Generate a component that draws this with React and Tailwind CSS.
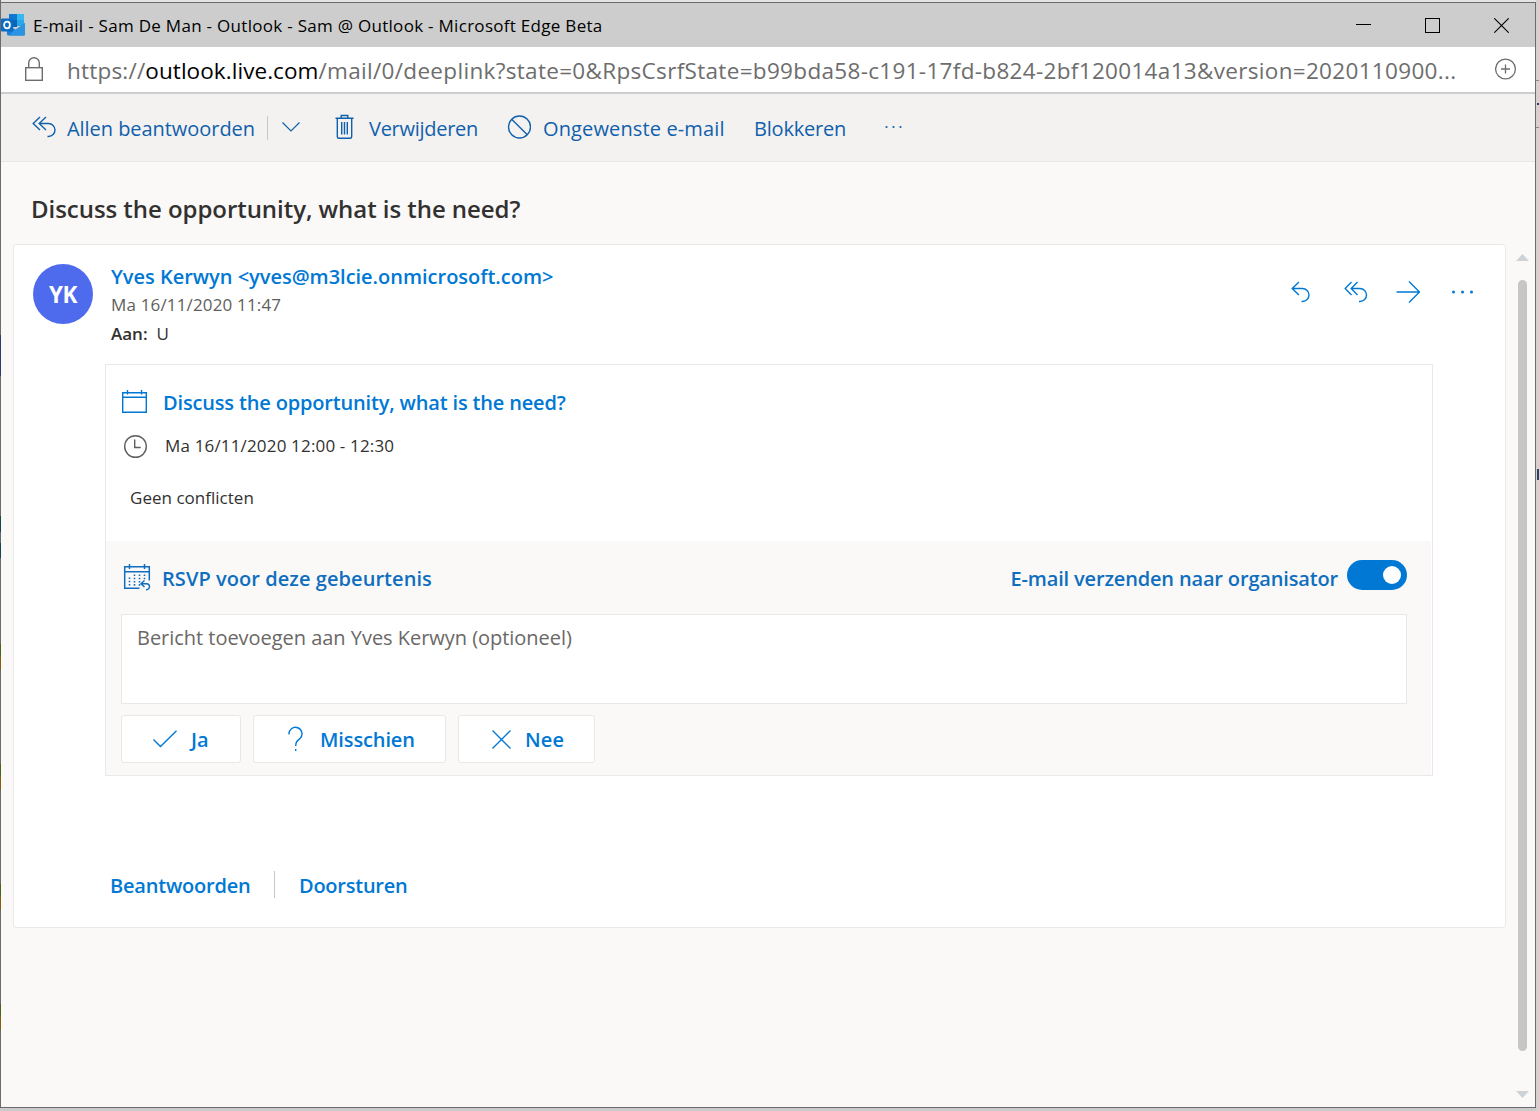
import React from "react";

const LEFT_EDGE = [
  [335, "bg-[#6b6b6b]"],
  [41, "bg-[#2f3a72]"],
  [140, "bg-[#6b6b6b]"],
  [16, "bg-[#17454d]"],
  [11, "bg-[#5a6a6e]"],
  [15, "bg-[#17454d]"],
  [86, "bg-[#6b6b6b]"],
  [12, "bg-[#4a6418]"],
  [14, "bg-[#84600e]"],
  [94, "bg-[#6b6b6b]"],
  [12, "bg-[#4a6418]"],
  [14, "bg-[#84600e]"],
  [94, "bg-[#6b6b6b]"],
  [12, "bg-[#4a6418]"],
  [14, "bg-[#84600e]"],
  [94, "bg-[#6b6b6b]"],
  [12, "bg-[#4a6418]"],
  [14, "bg-[#84600e]"],
  [78, "bg-[#6b6b6b]"],
];

function Icon({ w, h, className = "", sw = 1.4, children }) {
  return (
    <svg
      width={w}
      height={h}
      viewBox={`0 0 ${w} ${h}`}
      className={`shrink-0 ${className}`}
      fill="none"
      stroke="currentColor"
      strokeWidth={sw}
    >
      {children}
    </svg>
  );
}

function OutlookLogo() {
  return (
    <svg width="25" height="22" viewBox="0 0 25 22" className="-mt-px shrink-0">
      <rect x="8" y="0" width="15" height="12" fill="#28a8ea" />
      <rect x="8" y="0" width="8" height="6" fill="#0f78d0" />
      <rect x="16" y="0" width="7" height="6" fill="#35b8f1" />
      <rect x="8" y="6" width="8" height="7" fill="#0a64b8" />
      <path d="M6 10L15 16L24 9V20Q24 21.500 22.500 21.500H7.500Q6 21.500 6 20Z" fill="#1a7fd6" />
      <path d="M24 9L11 18L9 21.500H22.500Q24 21.500 24 20Z" fill="#2a94e2" />
      <rect x="0" y="4.500" width="12" height="13" rx="1" fill="#0a6cc4" />
      <ellipse cx="6" cy="11" rx="2.900" ry="3.300" fill="none" stroke="#fff" strokeWidth="1.800" />
    </svg>
  );
}

function TitleBar() {
  return (
    <div className="flex h-[44px] items-center bg-[#cdcdcd] text-black">
      <OutlookLogo />
      <span className="ml-[7px] flex-1 whitespace-nowrap pt-[2px] text-[17px] tracking-[0.29px]">
        E-mail - Sam De Man - Outlook - Sam @ Outlook - Microsoft Edge Beta
      </span>
      <Icon w={15} h={15} sw={1} className="mr-[54px]">
        <path d="M0 6.500H15" />
      </Icon>
      <Icon w={15} h={15} sw={1} className="mr-[54px]">
        <rect x="0.500" y="0.500" width="14" height="14" />
      </Icon>
      <Icon w={15} h={15} sw={1.1} className="mr-[26px]">
        <path d="M0.300 0.300L14.700 14.700M14.700 0.300L0.300 14.700" />
      </Icon>
    </div>
  );
}

function AddressBar() {
  return (
    <div className="flex h-[47px] items-center border-b-2 border-[#cecece] bg-white text-[#6d6d6d]">
      <Icon w={20} h={26} className="-mt-px ml-[23px]" sw={1.4}>
        <rect x="1.700" y="11.700" width="16.600" height="12.600" />
        <path d="M4.700 11.500V7A5.300 5.300 0 0 1 15.300 7V11.500" />
      </Icon>
      <span className="ml-[23px] flex-1 whitespace-nowrap pt-[2px] text-[22.5px] tracking-[0.32px]">
        <span className="tracking-[0.2px]">https://</span>
        <span className="tracking-[0.06px] text-black">outlook.live.com</span>
        /mail/0/deeplink?state=0&amp;RpsCsrfState=b99bda58-c191-17fd-b824-2bf120014a13&amp;version=2020110900...
      </span>
      <Icon w={22} h={22} className="-mt-px mr-[18px]" sw={1.3}>
        <circle cx="10.500" cy="11" r="9.900" />
        <path d="M10.500 6.500V15.500M6 11H15" />
      </Icon>
    </div>
  );
}

function Toolbar() {
  return (
    <div className="flex h-[68px] items-center border-b border-[#e8e7e6] bg-[#f3f2f1] text-[20px] text-[#1160ab]">
      <Icon w={24} h={22} className="-mt-px ml-[31px]" sw={1.4}>
        <path d="M8 1L1.200 7.500L8 14M14 1L7.200 7.500L14 14M7.200 7.500H16.500A6.300 6.300 0 0 1 16.500 20.500H15.500" />
      </Icon>
      <span className="ml-[11px] w-[188px] whitespace-nowrap pt-[2px] tracking-[-0.05px]">Allen beantwoorden</span>
      <span className="ml-[12px] h-[24px] w-px bg-[#c8c6c4]" />
      <Icon w={18} h={10} className="-mt-[2px] ml-[14px]" sw={1.2}>
        <path d="M0.500 0.500L9 9L17.500 0.500" />
      </Icon>
      <Icon w={20} h={26} className="-mt-px ml-[35px]" sw={1.4}>
        <path d="M0.500 4.200H18.500M6.200 4V1.500H12.800V4M2.300 4.500V22.500Q2.300 24.300 4 24.300H15Q16.700 24.300 16.700 22.500V4.500M6.700 8V20.500M9.500 8V20.500M12.300 8V20.500" />
      </Icon>
      <span className="ml-[14px] w-[109px] whitespace-nowrap pt-[2px] tracking-[-0.28px]">Verwijderen</span>
      <Icon w={24} h={26} className="ml-[29px]" sw={1.4}>
        <circle cx="12.500" cy="12" r="11" />
        <path d="M4.700 4.200L20.300 19.800" />
      </Icon>
      <span className="ml-[12px] w-[181px] whitespace-nowrap pt-[2px] tracking-[0.13px]">Ongewenste e-mail</span>
      <span className="ml-[30px] w-[92px] whitespace-nowrap pt-[2px] tracking-[-0.206px]">Blokkeren</span>
      <svg width="17" height="4" viewBox="0 0 17 4" className="-mt-[2px] ml-[39px]" fill="currentColor">
        <circle cx="1.500" cy="2" r="1.100" />
        <circle cx="8.500" cy="2" r="1.100" />
        <circle cx="15.500" cy="2" r="1.100" />
      </svg>
    </div>
  );
}

function SenderHeader() {
  return (
    <div className="flex pl-[19px] pt-[18px]">
      <div className="mt-[1px] flex size-[60px] items-center justify-center rounded-full bg-[#4f6bed] pt-[2px] text-[22.5px] font-bold tracking-[-0.5px] text-white">
        YK
      </div>
      <div className="ml-[18px] flex-1 whitespace-nowrap">
        <div className="h-[28px] text-[20px] font-semibold leading-[27px] tracking-[-0.014px] text-[#0078d4]">
          Yves Kerwyn &lt;yves@m3lcie.onmicrosoft.com&gt;
        </div>
        <div className="h-[29px] text-[17px] leading-[27px] tracking-[0.16px] text-[#605e5c]">Ma 16/11/2020 11:47</div>
        <div className="flex h-[28px] gap-[9px] text-[17px] leading-[27px] text-[#323130]">
          <span className="font-semibold">Aan:</span>
          <span>U</span>
        </div>
      </div>
      <div className="mr-[31px] mt-[18px] flex h-[22px] items-start text-[#0078d4]">
        <Icon w={20} h={22} sw={1.4}>
          <path d="M8 1L1.200 7.500L8 14M1.200 7.500H11.500A6.300 6.300 0 0 1 11.500 20.500H10.500" />
        </Icon>
        <Icon w={24} h={22} className="ml-[33px]" sw={1.4}>
          <path d="M7.500 1L1.200 7.500L7.500 14M13.500 1L7.200 7.500L13.500 14M7.200 7.500H16A6.300 6.300 0 0 1 16 20.500H15" />
        </Icon>
        <Icon w={24} h={22} className="ml-[28px]" sw={1.4}>
          <path d="M0.500 11H23.500M13 0.500L23.500 11L13 21.500" />
        </Icon>
        <svg width="22" height="4" viewBox="0 0 22 4" className="ml-[32px] mt-[9px]" fill="currentColor">
          <circle cx="1.500" cy="2" r="1.500" />
          <circle cx="10.500" cy="2" r="1.500" />
          <circle cx="19.500" cy="2" r="1.500" />
        </svg>
      </div>
    </div>
  );
}

function RsvpIcon() {
  return (
    <svg width="28" height="27" viewBox="0 0 28 27" className="shrink-0" fill="none" stroke="#106ebe">
      <path d="M16.500 24.300H1.700V2.700H26.300V16.500M1.700 7.700H26.300" strokeWidth="1.500" />
      <path d="M6.500 0V5M21.500 0V5" strokeWidth="1.500" />
      <path
        d="M6.500 13.500V22M11.500 10.500V22M16.500 10.500V22M21.500 10.500V16"
        strokeWidth="1.600"
        strokeDasharray="1.600 1.600"
      />
      <path d="M21.500 16.500L18 19.700L21.500 23M18 19.700H23.500A3 3 0 0 1 23.500 25.700H23" strokeWidth="1.400" />
    </svg>
  );
}

function RsvpButton({ className, children }) {
  return (
    <button
      className={`flex h-[48px] items-center rounded-[3px] border border-[#e9e8e7] bg-white text-[20px] font-semibold text-[#0078d4] ${className}`}
    >
      {children}
    </button>
  );
}

function EventCard() {
  return (
    <div className="ml-[91px] h-[412px] w-[1328px] border border-[#e9e9e9]">
      <div className="h-[176px] whitespace-nowrap pt-[24px]">
        <div className="flex h-[28px] items-center pl-[16px]">
          <Icon w={26} h={24} sw={1.4} className="-mt-[2px] text-[#0078d4]">
            <path d="M0.700 2.700H24.300V22.300H0.700ZM0.700 7.200H24.300M5.500 0V4.500M19.500 0V4.500" />
          </Icon>
          <span className="ml-[15px] pb-px text-[20px] font-semibold leading-[27px] tracking-[-0.165px] text-[#0078d4]">
            Discuss the opportunity, what is the need?
          </span>
        </div>
        <div className="mt-[15px] flex h-[28px] items-center pl-[17px] text-[#323130]">
          <Icon w={24} h={24} sw={1.4} className="text-[#605e5c]">
            <circle cx="12.500" cy="12.500" r="10.800" />
            <path d="M11.700 5.500V13.500H17.700" />
          </Icon>
          <span className="ml-[18px] pb-px text-[17px] leading-[27px] tracking-[0.165px]">Ma 16/11/2020 12:00 - 12:30</span>
        </div>
        <div className="mt-[24px] pl-[24px] text-[17px] leading-[27px] tracking-[0.02px] text-[#323130]">
          Geen conflicten
        </div>
      </div>
      <div className="mr-[1px] h-[234px] bg-[#faf9f8] pl-[15px] pt-[19px]">
        <div className="flex h-[36px] items-start pl-[2px] pr-[24px] text-[20px] font-semibold leading-[37px] text-[#106ebe]">
          <div className="mt-[4px]">
            <RsvpIcon />
          </div>
          <span className="ml-[11px] flex-1 tracking-[0.06px]">RSVP voor deze gebeurtenis</span>
          <span className="mr-[9px] tracking-[-0.161px]">E-mail verzenden naar organisator</span>
          <div className="flex h-[30px] w-[60px] items-center justify-end rounded-full bg-[#0078d4] pr-[6px]">
            <span className="size-[18px] rounded-full bg-white" />
          </div>
        </div>
        <div className="mt-[18px] h-[90px] w-[1286px] border border-[#e9e8e7] bg-white pl-[15px] pt-[9px] text-[20px] leading-[27px] tracking-[-0.03px] text-[#6a6866]">
          Bericht toevoegen aan Yves Kerwyn (optioneel)
        </div>
        <div className="mt-[11px] flex gap-[12px]">
          <RsvpButton className="w-[120px] pl-[31px]">
            <Icon w={24} h={18} sw={1.4}>
              <path d="M0.500 9.500L7.500 16.500L23.500 0.800" />
            </Icon>
            <span className="ml-[14px] pt-[1px]">Ja</span>
          </RsvpButton>
          <RsvpButton className="w-[193px] pl-[34px]">
            <Icon w={16} h={26} sw={1.4}>
              <path d="M1 8.500A6.500 6.500 0 1 1 12 12.500C9 15 7.700 16 7.700 20M7.700 23V25" />
            </Icon>
            <span className="ml-[16px] pt-[1px] tracking-[-0.12px]">Misschien</span>
          </RsvpButton>
          <RsvpButton className="w-[137px] pl-[33px]">
            <Icon w={19} h={19} sw={1.3}>
              <path d="M0.500 0.500L18.500 18.500M18.500 0.500L0.500 18.500" />
            </Icon>
            <span className="ml-[14px] pt-[1px] tracking-[0.2px]">Nee</span>
          </RsvpButton>
        </div>
      </div>
    </div>
  );
}

function MessageCard() {
  return (
    <div className="ml-[12px] h-[684px] w-[1493px] rounded-[3px] border border-[#ebeaea] bg-white">
      <SenderHeader />
      <div className="pt-[16px]">
        <EventCard />
      </div>
      <div className="mt-[95px] flex h-[28px] items-center pl-[96px] text-[20px] font-semibold leading-[28px] text-[#0078d4]">
        <span className="w-[140px] whitespace-nowrap pt-px tracking-[-0.205px]">Beantwoorden</span>
        <span className="-mt-[2px] ml-[24px] h-[27px] w-px bg-[#c8c6c4]" />
        <span className="ml-[24px] pt-px tracking-[-0.246px]">Doorsturen</span>
      </div>
    </div>
  );
}

function Scrollbar() {
  return (
    <div className="mt-[10px] flex w-[13px] flex-col items-center">
      <svg width="13" height="7" viewBox="0 0 13 7">
        <path d="M6.500 0L13 7H0Z" fill="#cdd3d6" />
      </svg>
      <div className="mt-[19px] h-[771px] w-[9px] rounded-full bg-[#c8c6c4]" />
      <svg width="13" height="7" viewBox="0 0 13 7" className="mt-[40px]">
        <path d="M0 0H13L6.500 7Z" fill="#cdd3d6" />
      </svg>
    </div>
  );
}

export default function App() {
  return (
    <div className="flex h-[1111px] w-[1539px] overflow-hidden bg-[#cbcbcb] font-['Open_Sans','Noto_Sans',sans-serif]">
      <div className="flex w-px shrink-0 flex-col">
        {LEFT_EDGE.map(([height, color], i) => (
          <div key={i} className={`shrink-0 ${color}`} style={{ height }} />
        ))}
      </div>
      <div className="flex w-[1535px] shrink-0 flex-col">
        <div className="h-[2px] bg-[#e4e4e4]" />
        <div className="flex h-[1106px] flex-col border-y border-r border-[#6b6b6b] bg-[#faf9f8]">
          <TitleBar />
          <AddressBar />
          <Toolbar />
          <h1 className="h-[82px] whitespace-nowrap pl-[30px] pt-[29px] text-[24px] font-semibold leading-[36px] tracking-[-0.05px] text-[#323130]">
            Discuss the opportunity, what is the need?
          </h1>
          <div className="flex gap-[10px]">
            <MessageCard />
            <Scrollbar />
          </div>
        </div>
      </div>
      <div className="flex w-[3px] shrink-0 flex-col bg-[#d2d2d2]">
        <div className="mt-[80px] h-px bg-[#8a8a8a]" />
        <div className="ml-px mt-[22px] h-[2px] bg-[#2b3a66]" />
        <div className="mt-[22px] h-px bg-[#8a8a8a]" />
        <div className="ml-px mt-[341px] h-[11px] bg-[#23476b]" />
      </div>
    </div>
  );
}
